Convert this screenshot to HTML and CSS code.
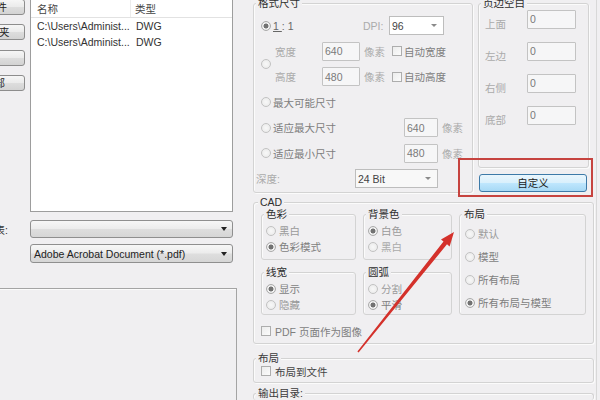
FILE: index.html
```html
<!DOCTYPE html>
<html lang="zh-CN">
<head>
<meta charset="utf-8">
<title>导出设置</title>
<link rel="stylesheet" href="styles.css">
</head>
<body>
<div class="page">
  <div class="left">
    <div class="left-top">
      <div class="btncol">
        <button class="wbtn b1">添加文件</button>
        <button class="wbtn b2">添加文件夹</button>
        <button class="wbtn b3">移除</button>
        <button class="wbtn b4">清除全部</button>
      </div>
      <div class="filelist">
        <div class="lhead"><span class="hc1">名称</span><span class="hc2">类型</span></div>
        <div class="lrow"><span class="lc1">C:\Users\Administ...</span><span class="lc2">DWG</span></div>
        <div class="lrow"><span class="lc1">C:\Users\Administ...</span><span class="lc2">DWG</span></div>
      </div>
      <div class="flabel">文件列表:</div>
      <div class="wcombo wc1"><span class="dd"></span></div>
      <div class="wcombo wc2"><span class="wtext">Adobe Acrobat Document (*.pdf)</span><span class="dd"></span></div>
    </div>
    <div class="left-bottom"></div>
  </div>

  <div class="right">
    <div class="row1">
      <div class="group fmt">
        <div class="gtitle">格式尺寸</div>
        <div class="frows">
          <div class="frow">
            <span class="radio on rf"></span>
            <span class="flab w90 c-mid one"><u>1</u>:1</span>
            <span class="w26 c-dis">DPI:</span>
            <div class="dcombo w55"><span>96</span><span class="sdd"></span></div>
          </div>
          <div class="fblock">
            <span class="radio rf"></span>
            <div class="fsub">
              <div class="frow">
                <span class="w47 c-dis">宽度</span>
                <div class="tb w38">640</div>
                <span class="unit c-dis">像素</span>
                <span class="check"></span>
                <span class="clab c-mid">自动宽度</span>
              </div>
              <div class="frow">
                <span class="w47 c-dis">高度</span>
                <div class="tb w38">480</div>
                <span class="unit c-dis">像素</span>
                <span class="check"></span>
                <span class="clab c-mid">自动高度</span>
              </div>
            </div>
          </div>
          <div class="frow">
            <span class="radio rf"></span>
            <span class="flab c-mid">最大可能尺寸</span>
          </div>
          <div class="frow">
            <span class="radio rf"></span>
            <span class="flab w131 c-mid">适应最大尺寸</span>
            <div class="tb w34">640</div>
            <span class="unit c-dis">像素</span>
          </div>
          <div class="frow">
            <span class="radio rf"></span>
            <span class="flab w131 c-mid">适应最小尺寸</span>
            <div class="tb w34">480</div>
            <span class="unit c-dis">像素</span>
          </div>
          <div class="frow">
            <span class="depth c-dis">深度:</span>
            <div class="dcombo w83 grey"><span>24 Bit</span><span class="sdd"></span></div>
          </div>
        </div>
      </div>

      <div class="margcol">
        <div class="group marg">
          <div class="gtitle">页边空白</div>
          <div class="mrows">
            <div class="mrow"><span class="mlab c-dis">上面</span><div class="tb w49">0</div></div>
            <div class="mrow"><span class="mlab c-dis">左边</span><div class="tb w49">0</div></div>
            <div class="mrow"><span class="mlab c-dis">右侧</span><div class="tb w49">0</div></div>
            <div class="mrow"><span class="mlab c-dis">底部</span><div class="tb w49">0</div></div>
          </div>
        </div>
        <button class="custom">自定义</button>
      </div>
    </div>

    <div class="group cad">
      <div class="gtitle">CAD</div>
      <div class="cadgrid">
        <div class="group sub">
          <div class="gtitle">色彩</div>
          <div class="srows">
            <div class="srow"><span class="radio"></span><span class="slab c-lt">黑白</span></div>
            <div class="srow"><span class="radio on"></span><span class="slab c-mid">色彩模式</span></div>
          </div>
        </div>
        <div class="group sub">
          <div class="gtitle">背景色</div>
          <div class="srows">
            <div class="srow"><span class="radio on"></span><span class="slab c-lt">白色</span></div>
            <div class="srow"><span class="radio"></span><span class="slab c-dis">黑白</span></div>
          </div>
        </div>
        <div class="group sub lay">
          <div class="gtitle">布局</div>
          <div class="srows">
            <div class="srow tall"><span class="radio"></span><span class="slab c-lt">默认</span></div>
            <div class="srow tall"><span class="radio"></span><span class="slab c-mid">模型</span></div>
            <div class="srow tall"><span class="radio"></span><span class="slab c-mid">所有布局</span></div>
            <div class="srow tall"><span class="radio on"></span><span class="slab c-mid">所有布局与模型</span></div>
          </div>
        </div>
        <div class="group sub">
          <div class="gtitle">线宽</div>
          <div class="srows">
            <div class="srow"><span class="radio on"></span><span class="slab c-mid">显示</span></div>
            <div class="srow"><span class="radio"></span><span class="slab c-lt">隐藏</span></div>
          </div>
        </div>
        <div class="group sub">
          <div class="gtitle">圆弧</div>
          <div class="srows">
            <div class="srow"><span class="radio"></span><span class="slab c-lt">分割</span></div>
            <div class="srow"><span class="radio on"></span><span class="slab c-mid">平滑</span></div>
          </div>
        </div>
      </div>
      <div class="chkrow">
        <span class="check"></span><span class="clab2 c-mid">PDF 页面作为图像</span>
      </div>
    </div>

    <div class="group layout">
      <div class="gtitle">布局</div>
      <div class="chkrow tight">
        <span class="check"></span><span class="clab2 c-dk">布局到文件</span>
      </div>
    </div>

    <div class="group outdir">
      <div class="gtitle">输出目录:</div>
    </div>
  </div>

  <div class="redbox"></div>
  <svg class="arrow" width="600" height="400" viewBox="0 0 600 400">
    <polygon points="358.6,352.5 447,244.3 449.6,246.4 454,232 441,239.5 443.5,241.5 357.4,351.5" fill="#d4312b"/>
  </svg>
</div>
</body>
</html>
```

FILE: styles.css
```css
* { box-sizing: border-box; }
html, body { margin: 0; padding: 0; }
body {
  width: 600px;
  height: 400px;
  overflow: hidden;
  background: #f0eff1;
  font-family: "Liberation Sans", "Noto Sans CJK SC", sans-serif;
  font-size: 10.5px;
  color: #333;
}
.page { position: relative; display: flex; width: 600px; height: 400px; overflow: hidden; }

/* colours */
.c-dis { color: #ababab; }
.c-lt { color: #9a9a9a; }
.c-mid { color: #7e7e7e; }
.c-dk { color: #444; }

/* ---------- left side ---------- */
.left { width: 237px; flex: none; display: flex; flex-direction: column; }
.left-top {
  flex: none;
  height: 292px;
  margin-top: -4px;
  display: grid;
  grid-template-columns: 25px 203px;
  grid-template-rows: 216px auto auto;
  column-gap: 5px;
  align-content: start;
}
.btncol { grid-column: 1; grid-row: 1; display: flex; flex-direction: column; gap: 9.5px; padding-top: 2.5px; }
.wbtn {
  width: 70px;
  height: 16px;
  margin-left: -45px;
  border: 1px solid #8d8d8d;
  border-radius: 3px;
  background: linear-gradient(#f6f6f6, #ebebeb 48%, #dddddd 52%, #d3d3d3);
  font: inherit;
  color: #222;
  text-align: right;
  line-height: 14px;
  white-space: nowrap;
  overflow: hidden;
  padding: 0;
}
.b1 { padding-right: 17px; }
.b2 { padding-right: 14.5px; }
.b3 { padding-right: 40px; }
.b4 { padding-right: 19px; }

.filelist { grid-column: 2; grid-row: 1; background: #fff; border: 1px solid #9d9d9d; }
.lhead { display: flex; height: 21px; padding-top: 2px; align-items: center; border-bottom: 1px solid #e2e2e2; color: #444; }
.hc1 { width: 100px; padding-left: 6px; border-right: 1px solid #ececec; height: 100%; display: flex; align-items: center; }
.hc2 { padding-left: 4px; }
.lrow { display: flex; height: 16px; align-items: center; color: #333; }
.lc1 { width: 105px; padding-left: 6px; white-space: nowrap; }

.flabel {
  grid-column: 1; grid-row: 2;
  margin-top: 8px; height: 18px;
  display: flex; align-items: center; justify-content: flex-end;
  padding-right: 17px;
  white-space: nowrap;
  color: #333;
}
.wcombo {
  grid-column: 2;
  display: flex; align-items: center;
  border: 1px solid #8f8f8f;
  border-radius: 3px;
  background: linear-gradient(#f7f7f7, #ececec 48%, #dedede 52%, #d6d6d6);
  padding-left: 3px;
}
.wc1 { grid-row: 2; height: 18px; margin-top: 8px; }
.wc2 { grid-row: 3; height: 19px; margin-top: 6px; }
.wtext { color: #222; white-space: nowrap; }
.dd {
  margin-left: auto; margin-right: 5px;
  width: 0; height: 0;
  border-left: 3.5px solid transparent;
  border-right: 3.5px solid transparent;
  border-top: 4px solid #222;
}
.left-bottom {
  flex: 1;
  border-top: 1px solid #a4a4a4;
  border-right: 1px solid #a4a4a4;
  box-shadow: inset 0 1px #fbfbfb;
}

/* ---------- right side ---------- */
.right {
  width: 360px; flex: none;
  padding: 3px 2px 0 16px;
  border-right: 1px solid #d8d8d8;
  display: flex; flex-direction: column;
  overflow: hidden;
}
.right > * { flex: none; }
.group {
  border: 1px solid #d3d3d3;
  border-radius: 3px;
  box-shadow: inset 1px 1px #fbfbfb, 1px 1px #fbfbfb;
}
.gtitle {
  display: table;
  margin: -7px 0 0 2px;
  padding: 0 2px;
  height: 13px;
  line-height: 13px;
  background: #f0eff1;
  color: #2e2e2e;
  white-space: nowrap;
}
.row1 { display: flex; gap: 5px; height: 190px; }

.fmt { width: 220px; height: 190px; }
.frows { display: flex; flex-direction: column; gap: 6.5px; margin-top: 6px; }
.frow { display: flex; align-items: center; height: 19px; white-space: nowrap; }
.fblock { display: flex; align-items: center; }
.fsub { display: flex; flex-direction: column; gap: 6.5px; margin-left: 4px; }

.radio {
  flex: none;
  width: 10px; height: 10px;
  border-radius: 50%;
  border: 1px solid #c2c2c2;
  background: radial-gradient(circle, #f8f8f8, #e8e8e8);
}
.radio.on { background: radial-gradient(circle, #727272 0 2.2px, #f6f6f6 2.8px 3.2px, #e2e2e2 4px); border-color: #ababab; }
.rf { margin-left: 7px; }
.flab { margin-left: 2px; }
.one { letter-spacing: 3px; color: #666; }
.w90 { width: 90px; }
.w26 { width: 26px; }
.w47 { width: 47px; }
.w131 { width: 131px; }
.w55 { width: 55px; }
.w38 { width: 38px; }
.w34 { width: 34px; }
.w49 { width: 49px; }
.w83 { width: 83px; }

.tb {
  flex: none;
  height: 19px;
  border: 1px solid #c3c3c3;
  border-radius: 1px;
  background: #f6f6f7;
  padding-left: 2px;
  display: flex; align-items: center;
  color: #7a7a7a;
}
.unit { margin-left: 4px; width: 28px; }
.check {
  flex: none;
  width: 10px; height: 10px;
  border: 1px solid #adadad;
  background: linear-gradient(135deg, #ececec, #fbfbfb);
}
.clab { margin-left: 2px; }
.dcombo {
  flex: none;
  height: 19px;
  border: 1px solid #bdbdbd;
  background: #fff;
  display: flex; align-items: center;
  padding-left: 2px;
  color: #444;
}
.dcombo.grey { background: #f8f8f8; }
.sdd {
  margin-left: auto; margin-right: 6px;
  width: 0; height: 0;
  border-left: 3px solid transparent;
  border-right: 3px solid transparent;
  border-top: 3px solid #8a8a8a;
}
.depth { margin-left: 2px; width: 99px; }

.margcol { width: 111px; display: flex; flex-direction: column; }
.marg { height: 165px; flex: none; }
.mrows { display: flex; flex-direction: column; gap: 14px; }
.mrow { display: flex; align-items: center; height: 18px; }
.mlab { margin-left: 6px; width: 42px; padding-top: 8px; }
.custom {
  flex: none;
  margin: 6px 0 0 1px;
  width: 108px; height: 18px;
  border: 1px solid #3d7aa8;
  border-radius: 3px;
  background: linear-gradient(#eaf6fd, #d9f0fc 48%, #bee6fd 52%, #a7d9f5);
  font: inherit;
  color: #1a1a1a;
  padding: 0;
  line-height: 16px;
}

.cad { margin-top: 9px; height: 142px; }
.cad > .gtitle { margin-left: 4px; }
.cadgrid {
  display: grid;
  grid-template-columns: 95px 89px 127px;
  grid-template-rows: 46px 43px;
  column-gap: 7px;
  row-gap: 12px;
  margin: 5px 0 0 7px;
}
.sub { box-shadow: inset 1px 1px #fbfbfb; }
.lay { grid-column: 3; grid-row: 1 / span 2; }
.srows { margin-top: 1.5px; }
.srow { display: flex; align-items: center; height: 16px; white-space: nowrap; }
.srow .radio { margin-left: 4px; }
.slab { margin-left: 3px; }
.lay .srows { margin-top: 1px; }
.srow.tall { height: 23px; }
.lay .srow .radio { margin-left: 5px; }

.chkrow { display: flex; align-items: center; height: 14px; margin: 9px 0 0 7px; white-space: nowrap; }
.chkrow.tight { height: 12px; margin-top: 0; }
.clab2 { margin-left: 4px; }

.layout { margin-top: 14px; height: 25px; }
.layout > .gtitle, .outdir > .gtitle { color: #3a3a3a; }
.outdir { margin-top: 10px; height: 7px; border-bottom: 0; }

/* ---------- annotations ---------- */
.redbox {
  position: absolute;
  left: 458px; top: 158px;
  width: 135px; height: 39px;
  border: 2px solid #c6433f;
}
.arrow { position: absolute; left: 0; top: 0; pointer-events: none; }
```
